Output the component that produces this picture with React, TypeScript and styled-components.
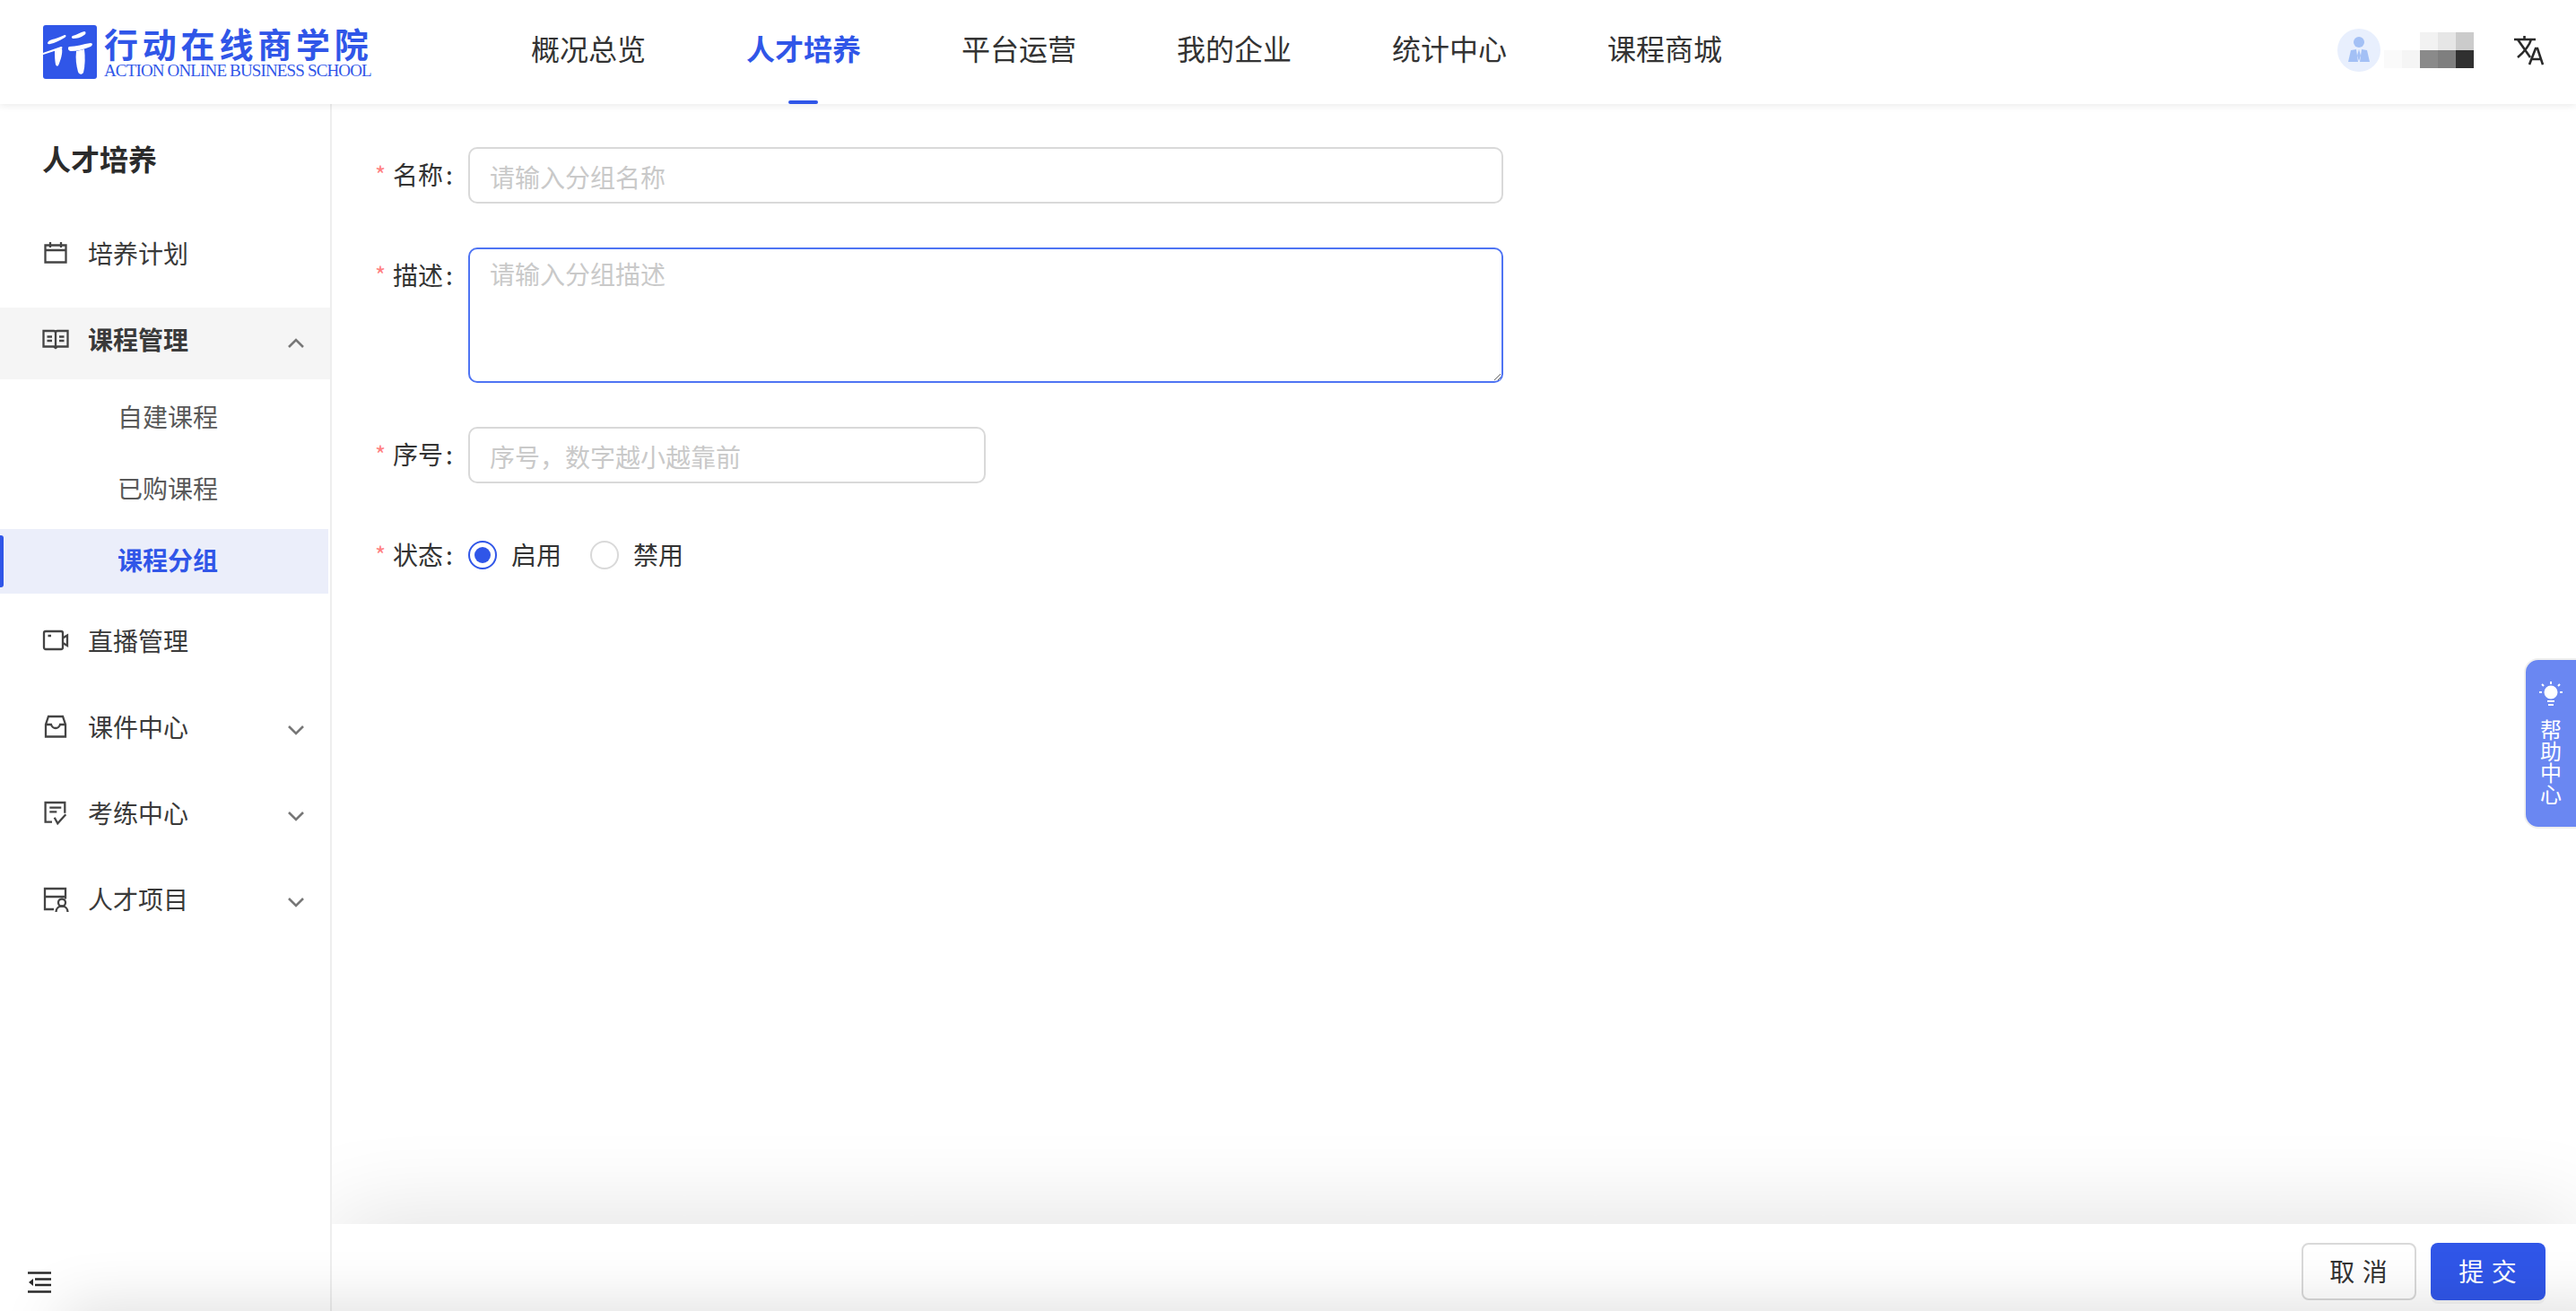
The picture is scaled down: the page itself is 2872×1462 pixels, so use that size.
import React from 'react'
import styled, { createGlobalStyle } from 'styled-components'

const GlobalStyle = createGlobalStyle`
  html, body {
    margin: 0;
    padding: 0;
    height: 100%;
    background: #fff;
    font-family: "Noto Sans CJK SC", "Noto Sans", sans-serif;
    color: #333;
  }
  * { box-sizing: border-box; }
`

const BLUE = '#3056e8'

const navItems = ['概况总览', '人才培养', '平台运营', '我的企业', '统计中心', '课程商城']

const Stroke = styled.svg`
  width: 32px;
  height: 32px;
  flex: none;
  fill: none;
  stroke: #444;
  stroke-width: 2.300;
`

const CalendarIcon = () => (
  <Stroke viewBox="0 0 32 32">
    <path d="M4.500 7.500h23v19h-23zM4.500 13h23M10 4v6M22 4v6" />
  </Stroke>
)
const BookIcon = () => (
  <Stroke viewBox="0 0 32 32">
    <path d="M2.500 7h11.500c1 0 2 .8 2 2 0-1.200 1-2 2-2h11.500v17.500H18l-2 1.500-2-1.500H2.500zM16 9v16M6.500 13.500h5.500M6.500 18h5.500M20 13.500h5.500M20 18h5.500" />
  </Stroke>
)
const VideoIcon = () => (
  <Stroke viewBox="0 0 32 32">
    <rect x="3" y="6" width="21" height="20" rx="2" />
    <path d="M24 13.500l5-3v11.500l-5-3M7.500 11h3.500" />
  </Stroke>
)
const InboxIcon = () => (
  <Stroke viewBox="0 0 32 32">
    <path d="M8 5h16l3 9v13.500H5V14zM5 14h6c1 3 2.500 4 5 4s4-1 5-4h6" />
  </Stroke>
)
const ExamIcon = () => (
  <Stroke viewBox="0 0 32 32">
    <path d="M12 26.700H4.600V5h21.700v11.700M9.300 10.700h13M9.300 15.300h8M14.700 21.700l3.600 6.600 9-10" />
  </Stroke>
)
const TalentIcon = () => (
  <Stroke viewBox="0 0 32 32">
    <path d="M14 28H4V5h23v11.500M4 14h23" />
    <circle cx="23" cy="20.500" r="4" />
    <path d="M16.500 31c0-4 3-6.500 6.500-6.500s6.500 2.500 6.500 6.500" />
  </Stroke>
)

const Chevron = ({ up }: { up?: boolean }) => (
  <ChevronSvg viewBox="0 0 20 20" $up={up}>
    <path d={up ? 'M2 14l8-8 8 8' : 'M2 6l8 8 8-8'} />
  </ChevronSvg>
)

const sideMenu = [
  { label: '直播管理', icon: <VideoIcon /> },
  { label: '课件中心', icon: <InboxIcon />, more: true },
  { label: '考练中心', icon: <ExamIcon />, more: true },
  { label: '人才项目', icon: <TalentIcon />, more: true },
]

const App = () => {
  return (
    <Page>
      <GlobalStyle />
      <Header>
        <Logo>
          <LogoMark viewBox="0 0 60 60">
            <rect width="60" height="60" rx="3" fill={BLUE} />
            <g fill="#fff">
              <path d="M5 20c1-3 5-4 9-5 4-1 7-3 10-4 2 0 2 2 0 3-5 3-11 6-16 7-2 .5-3 0-3-1z" />
              <path d="M0 31l20-7c2 0 2 2 0 2.500L0 33z" />
              <path d="M13 28l8-2c1 5-1 12-4 19-1 1-2 1-3-1-1-5-1-11-1-16z" />
              <path d="M33 12c4-1 9-4 13-5 2 0 2 3 0 4-4 3-9 4-12 4-2 0-3-2-1-3z" />
              <path d="M29 24c8 0 16-3 24-4 3 0 2 3 0 4-7 3-15 5-22 5-3 0-4-4-2-5z" />
              <path d="M37 29l9-2c1 8 1 18-1 26-2 3-5 2-6-1-2-7-3-15-2-23z" />
            </g>
          </LogoMark>
          <LogoText>
            <LogoTitle>行动在线商学院</LogoTitle>
            <LogoSub>ACTION ONLINE BUSINESS SCHOOL</LogoSub>
          </LogoText>
        </Logo>
        <Nav>
          {navItems.map((item) => (
            <NavItem key={item} $active={item === '人才培养'}>{item}</NavItem>
          ))}
        </Nav>
        <HeaderRight>
          <Avatar viewBox="0 0 48 48">
            <circle cx="24" cy="24" r="24" fill="#e8effd" />
            <circle cx="24" cy="15" r="6" fill="#a3c0f5" />
            <path d="M12 37l3-13 6-1 2 14zM36 37l-3-13-6-1-2 14z" fill="#a3c0f5" />
            <path d="M24 23l-2 7 2 6 2-6z" fill="#a3c0f5" />
          </Avatar>
          <BlurName>
            <Pixel $c="transparent" /><Pixel $c="transparent" /><Pixel $c="#f2f2f2" /><Pixel $c="#e6e6e6" /><Pixel $c="#cbcbcb" />
            <Pixel $c="#fafafa" /><Pixel $c="#f5f5f5" /><Pixel $c="#8a8a8a" /><Pixel $c="#7f7f7f" /><Pixel $c="#303030" />
          </BlurName>
          <LangIcon viewBox="0 0 34 34">
            <path d="M1 5h24M12.500 1v4M5 5l14 20M20 5c-2 7-8 14-15 20" />
            <path d="M18 33l7-18h2l6 18M20.500 27h10" />
          </LangIcon>
        </HeaderRight>
      </Header>
      <Body>
        <Sidebar>
          <SideTitle>人才培养</SideTitle>
          <SideRow>
            <CalendarIcon />
            <SideLabel>培养计划</SideLabel>
          </SideRow>
          <SideRow $open>
            <BookIcon />
            <SideLabel $bold>课程管理</SideLabel>
            <Chevron up />
          </SideRow>
          <SubList>
            <SubRow>自建课程</SubRow>
            <SubRow>已购课程</SubRow>
            <SubRow $active>课程分组</SubRow>
          </SubList>
          <SideRest>
            {sideMenu.map((m) => (
              <SideRow key={m.label}>
                {m.icon}
                <SideLabel>{m.label}</SideLabel>
                {m.more && <Chevron />}
              </SideRow>
            ))}
          </SideRest>
          <Collapse viewBox="0 0 26 24">
            <path d="M0 1.500h26M8 8.500h18M8 15h18M0 22.500h26" stroke="#2b2b2b" strokeWidth="2.400" fill="none" />
            <path d="M1 12l5-4v8z" fill="#2b2b2b" />
          </Collapse>
        </Sidebar>
        <Main>
          <Form>
            <FormRow>
              <FieldLabel>名称</FieldLabel>
              <TextInput placeholder="请输入分组名称" />
            </FormRow>
            <FormRow>
              <FieldLabel>描述</FieldLabel>
              <TextArea placeholder="请输入分组描述" />
            </FormRow>
            <FormRow>
              <FieldLabel>序号</FieldLabel>
              <TextInput $short placeholder="序号，数字越小越靠前" />
            </FormRow>
            <FormRow $center>
              <FieldLabel>状态</FieldLabel>
              <Radio $on />
              <RadioText>启用</RadioText>
              <Radio />
              <RadioText>禁用</RadioText>
            </FormRow>
          </Form>
          <Footer>
            <CancelBtn>取 消</CancelBtn>
            <SubmitBtn>提 交</SubmitBtn>
          </Footer>
        </Main>
      </Body>
      <HelpTab>
        <svg width="26" height="28" viewBox="0 0 26 28" fill="none" stroke="#fff" strokeWidth="2">
          <circle cx="13" cy="12" r="6.500" fill="#fff" />
          <path d="M13 0v3M3 3l2 2M23 3l-2 2M0 12h3M23 12h3M9 22h8M10 26h6" />
        </svg>
        <HelpText>帮助中心</HelpText>
      </HelpTab>
    </Page>
  )
}

export default App

const Page = styled.div`
  position: relative;
  width: 100%;
  height: 100vh;
  overflow: hidden;
  display: flex;
  flex-direction: column;
  background: #fff;

  /* soft shadow coming up from below the window edge */
  &::after {
    content: "";
    position: absolute;
    top: 100%;
    left: 70px;
    right: -60px;
    height: 60px;
    box-shadow: 0 0 70px rgba(0, 0, 0, 0.16);
    pointer-events: none;
    z-index: 5;
  }
`
const Header = styled.header`
  height: 116px;
  flex: none;
  display: flex;
  align-items: center;
  padding: 0 0 0 48px;
  background: #fff;
  box-shadow: 0 2px 8px rgba(0, 0, 0, 0.08);
  position: relative;
  z-index: 2;
`
const Logo = styled.div`
  width: 544px;
  flex: none;
  display: flex;
  align-items: center;
  gap: 8px;
`
const LogoMark = styled.svg`
  width: 60px;
  height: 60px;
  flex: none;
`
const LogoText = styled.div`
  display: flex;
  flex-direction: column;
  gap: 3px;
`
const LogoTitle = styled.div`
  font-size: 38px;
  line-height: 38px;
  font-weight: 700;
  letter-spacing: 4.800px;
  color: ${BLUE};
  white-space: nowrap;
`
const LogoSub = styled.div`
  font-family: "Liberation Serif", serif;
  font-size: 19px;
  line-height: 18px;
  letter-spacing: -0.850px;
  color: ${BLUE};
  white-space: nowrap;
`
const Nav = styled.nav`
  display: flex;
  gap: 112px;
  height: 100%;
`
const NavItem = styled.div<{ $active?: boolean }>`
  position: relative;
  display: flex;
  align-items: center;
  padding-bottom: 11px;
  font-size: 32px;
  color: ${(p) => (p.$active ? BLUE : '#333')};
  font-weight: ${(p) => (p.$active ? 700 : 400)};
  white-space: nowrap;

  &::after {
    content: "";
    display: ${(p) => (p.$active ? 'block' : 'none')};
    position: absolute;
    bottom: 0;
    left: 47px;
    width: 33px;
    height: 4px;
    border-radius: 2px;
    background: ${BLUE};
  }
`
const HeaderRight = styled.div`
  margin-left: auto;
  display: flex;
  align-items: center;
  padding: 0 36px 4px 0;
`
const Avatar = styled.svg`
  width: 48px;
  height: 48px;
  flex: none;
`
const BlurName = styled.div`
  display: grid;
  grid-template-columns: repeat(5, 20px);
  grid-template-rows: repeat(2, 20px);
  margin: 0 44px 0 4px;
`
const Pixel = styled.span<{ $c: string }>`
  background: ${(p) => p.$c};
`
const LangIcon = styled.svg`
  width: 34px;
  height: 34px;
  flex: none;
  fill: none;
  stroke: #2a2a2a;
  stroke-width: 2.600;
`
const Body = styled.div`
  flex: 1;
  min-height: 0;
  display: flex;
`
const Sidebar = styled.aside`
  position: relative;
  width: 370px;
  flex: none;
  border-right: 2px solid #eeeeee;
  background: #fff;
`
const SideTitle = styled.div`
  font-size: 32px;
  line-height: 44px;
  font-weight: 700;
  color: #2b2b2b;
  padding: 38px 0 0 47px;
  margin-bottom: 47px;
`
const SideRow = styled.div<{ $open?: boolean }>`
  height: 80px;
  display: flex;
  align-items: center;
  gap: 20px;
  padding: 0 28px ${(p) => (p.$open ? '10px' : '6px')} 46px;
  margin-top: ${(p) => (p.$open ? '18px' : '0')};
  margin-bottom: ${(p) => (p.$open ? '7px' : '16px')};
  background: ${(p) => (p.$open ? '#f5f5f5' : 'transparent')};
`
const SideLabel = styled.span<{ $bold?: boolean }>`
  font-size: 28px;
  flex: 1;
  color: #3a3a3a;
  font-weight: ${(p) => (p.$bold ? 700 : 400)};
  white-space: nowrap;
`
const ChevronSvg = styled.svg<{ $up?: boolean }>`
  width: 20px;
  height: 20px;
  flex: none;
  margin-top: ${(p) => (p.$up ? '10px' : '7px')};
  fill: none;
  stroke: #777;
  stroke-width: 2.600;
`
const SubList = styled.div`
  display: flex;
  flex-direction: column;
  gap: 8px;
  margin-bottom: 15px;
`
const SubRow = styled.div<{ $active?: boolean }>`
  position: relative;
  height: 72px;
  width: 366px;
  display: flex;
  align-items: center;
  padding: 0 0 4px 131px;
  font-size: 28px;
  white-space: nowrap;
  color: ${(p) => (p.$active ? BLUE : '#595959')};
  font-weight: ${(p) => (p.$active ? 700 : 400)};
  background: ${(p) => (p.$active ? '#ebeefa' : 'transparent')};

  &::before {
    content: "";
    display: ${(p) => (p.$active ? 'block' : 'none')};
    position: absolute;
    left: 0;
    top: 7px;
    bottom: 7px;
    width: 4px;
    border-radius: 0 3px 3px 0;
    background: ${BLUE};
  }
`
const SideRest = styled.div`
  display: flex;
  flex-direction: column;
`
const Collapse = styled.svg`
  position: absolute;
  left: 31px;
  bottom: 20px;
  width: 26px;
  height: 24px;
`
const Main = styled.main`
  position: relative;
  flex: 1;
  min-width: 0;
  overflow: hidden;
  display: flex;
  flex-direction: column;
`
const Form = styled.div`
  flex: 1;
  display: flex;
  flex-direction: column;
  gap: 49px;
  padding: 48px 0 0 48px;
`
const FormRow = styled.div<{ $center?: boolean }>`
  display: flex;
  align-items: ${(p) => (p.$center ? 'center' : 'flex-start')};
`
const FieldLabel = styled.label`
  width: 104px;
  flex: none;
  height: 62px;
  display: flex;
  align-items: center;
  padding-bottom: 2px;
  font-size: 28px;
  color: #333;
  white-space: nowrap;
  line-height: 1;

  &::before {
    content: "*";
    color: #ff8080;
    font-size: 26px;
    width: 20px;
    flex: none;
  }
  &::after {
    content: ":";
    margin-left: 3px;
  }
`
const TextInput = styled.input<{ $short?: boolean }>`
  width: ${(p) => (p.$short ? '577px' : '1154px')};
  height: 63px;
  border: 2px solid #d9d9d9;
  border-radius: 10px;
  padding: 2px 22px 0;
  font: inherit;
  font-size: 28px;
  outline: none;
  background: #fff;

  &::placeholder {
    color: #c9c9c9;
  }
`
const TextArea = styled.textarea`
  width: 1154px;
  height: 151px;
  border: 2px solid #4f74f3;
  border-radius: 10px;
  padding: 6px 22px;
  font: inherit;
  font-size: 28px;
  line-height: 1.500;
  outline: none;
  background: #fff;
  resize: vertical;

  &::placeholder {
    color: #c9c9c9;
  }
`
const Radio = styled.span<{ $on?: boolean }>`
  width: 32px;
  height: 32px;
  flex: none;
  border-radius: 50%;
  background: #fff;
  border: 2px solid ${(p) => (p.$on ? BLUE : '#d9d9d9')};
  display: flex;
  align-items: center;
  justify-content: center;

  &::after {
    content: "";
    display: ${(p) => (p.$on ? 'block' : 'none')};
    width: 18px;
    height: 18px;
    border-radius: 50%;
    background: ${BLUE};
  }
`
const RadioText = styled.span`
  font-size: 28px;
  color: #333;
  margin: 0 32px 2px 16px;
`
const Footer = styled.footer`
  height: 97px;
  flex: none;
  display: flex;
  align-items: center;
  justify-content: flex-end;
  gap: 16px;
  padding: 8px 34px 0 0;
  background: #fff;
  box-shadow: 0 0 110px rgba(0, 0, 0, 0.14);
`
const CancelBtn = styled.button`
  width: 128px;
  height: 64px;
  padding: 0 0 2px;
  border: 2px solid #d9d9d9;
  border-radius: 8px;
  background: #fff;
  color: #333;
  font: inherit;
  font-size: 28px;
  letter-spacing: 1px;
`
const SubmitBtn = styled.button`
  width: 128px;
  height: 64px;
  padding: 0 0 2px;
  border: none;
  border-radius: 8px;
  background: ${BLUE};
  color: #fff;
  font: inherit;
  font-size: 28px;
  letter-spacing: 1px;
  box-shadow: 0 4px 0 rgba(0, 0, 0, 0.04);
`
const HelpTab = styled.div`
  position: absolute;
  top: 734px;
  right: -4px;
  width: 62px;
  height: 190px;
  background: #6a87f2;
  border: 2px solid #eeeeee;
  border-radius: 16px 0 0 16px;
  display: flex;
  flex-direction: column;
  align-items: center;
  padding: 24px 2px 0 0;
  gap: 13px;
  color: #fff;
`
const HelpText = styled.div`
  width: 24px;
  font-size: 24px;
  line-height: 24px;
  text-align: center;
`
